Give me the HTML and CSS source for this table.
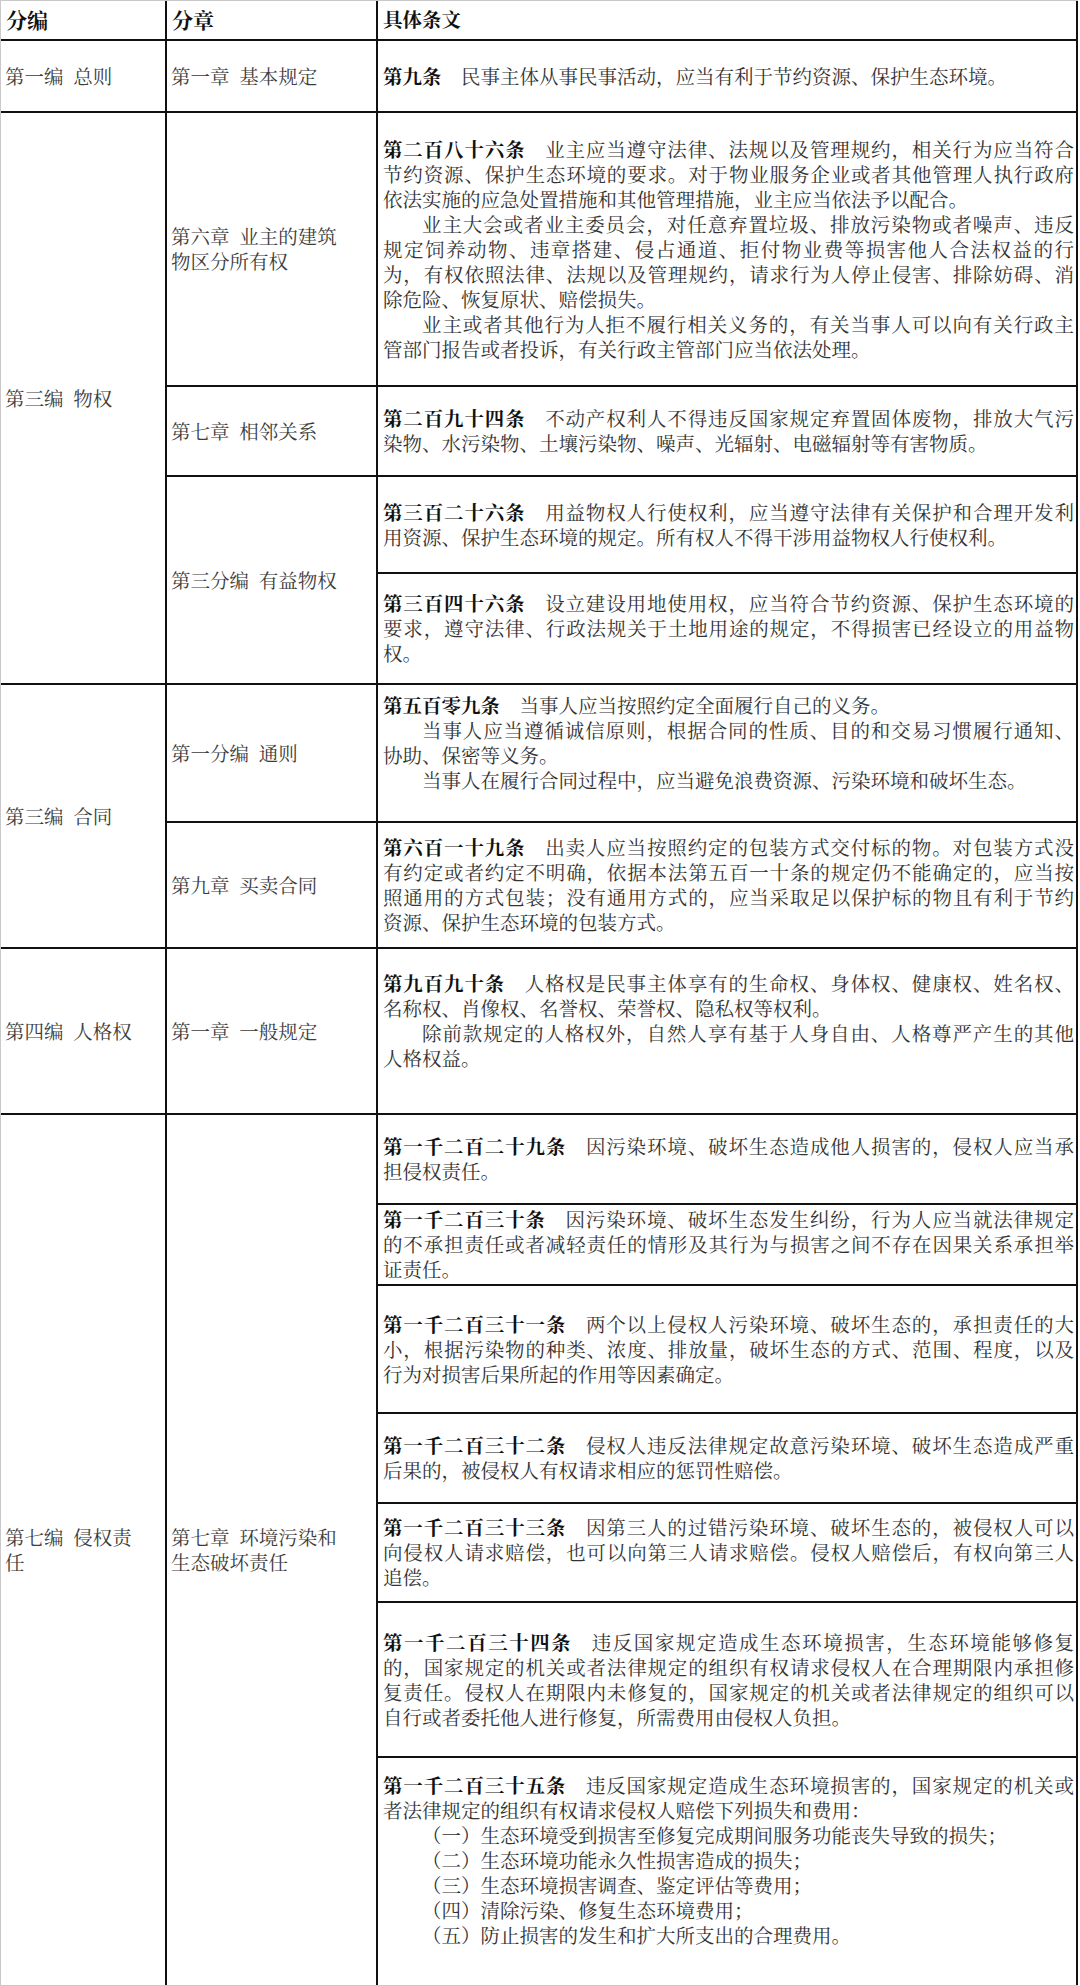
FILE: index.html
```html
<!DOCTYPE html>
<html lang="zh-CN">
<head>
<meta charset="utf-8">
<title>民法典 生态环境条文</title>
<link rel="stylesheet" href="styles.css">
</head>
<body>
<div class="sheet">
  <div class="cell head">分编</div>
  <div class="cell head">分章</div>
  <div class="cell head txt">具体条文</div>

  <div class="cell label">第一编&ensp;总则</div>
  <div class="cell label">第一章&ensp;基本规定</div>
  <div class="cell txt">
    <span class="ln end"><b>第九条</b>民事主体从事民事活动，应当有利于节约资源、保护生态环境。</span>
  </div>

  <div class="cell label span4">第三编&ensp;物权</div>
  <div class="cell label">
    <span class="lb">第六章&ensp;业主的建筑</span>
    <span class="lb">物区分所有权</span>
  </div>
  <div class="cell txt">
    <span class="ln"><b>第二百八十六条</b>业主应当遵守法律、法规以及管理规约，相关行为应当符合</span>
    <span class="ln">节约资源、保护生态环境的要求。对于物业服务企业或者其他管理人执行政府</span>
    <span class="ln end">依法实施的应急处置措施和其他管理措施，业主应当依法予以配合。</span>
    <span class="ln ind">业主大会或者业主委员会，对任意弃置垃圾、排放污染物或者噪声、违反</span>
    <span class="ln">规定饲养动物、违章搭建、侵占通道、拒付物业费等损害他人合法权益的行</span>
    <span class="ln">为，有权依照法律、法规以及管理规约，请求行为人停止侵害、排除妨碍、消</span>
    <span class="ln end">除危险、恢复原状、赔偿损失。</span>
    <span class="ln ind">业主或者其他行为人拒不履行相关义务的，有关当事人可以向有关行政主</span>
    <span class="ln end">管部门报告或者投诉，有关行政主管部门应当依法处理。</span>
  </div>

  <div class="cell label">第七章&ensp;相邻关系</div>
  <div class="cell txt">
    <span class="ln"><b>第二百九十四条</b>不动产权利人不得违反国家规定弃置固体废物，排放大气污</span>
    <span class="ln end">染物、水污染物、土壤污染物、噪声、光辐射、电磁辐射等有害物质。</span>
  </div>

  <div class="cell label span2">第三分编&ensp;有益物权</div>
  <div class="cell txt">
    <span class="ln"><b>第三百二十六条</b>用益物权人行使权利，应当遵守法律有关保护和合理开发利</span>
    <span class="ln end">用资源、保护生态环境的规定。所有权人不得干涉用益物权人行使权利。</span>
  </div>
  <div class="cell txt">
    <span class="ln"><b>第三百四十六条</b>设立建设用地使用权，应当符合节约资源、保护生态环境的</span>
    <span class="ln">要求，遵守法律、行政法规关于土地用途的规定，不得损害已经设立的用益物</span>
    <span class="ln end">权。</span>
  </div>

  <div class="cell label span2">第三编&ensp;合同</div>
  <div class="cell label">第一分编&ensp;通则</div>
  <div class="cell txt lift">
    <span class="ln end"><b>第五百零九条</b>当事人应当按照约定全面履行自己的义务。</span>
    <span class="ln ind">当事人应当遵循诚信原则，根据合同的性质、目的和交易习惯履行通知、</span>
    <span class="ln end">协助、保密等义务。</span>
    <span class="ln ind end">当事人在履行合同过程中，应当避免浪费资源、污染环境和破坏生态。</span>
  </div>

  <div class="cell label">第九章&ensp;买卖合同</div>
  <div class="cell txt">
    <span class="ln"><b>第六百一十九条</b>出卖人应当按照约定的包装方式交付标的物。对包装方式没</span>
    <span class="ln">有约定或者约定不明确，依据本法第五百一十条的规定仍不能确定的，应当按</span>
    <span class="ln">照通用的方式包装；没有通用方式的，应当采取足以保护标的物且有利于节约</span>
    <span class="ln end">资源、保护生态环境的包装方式。</span>
  </div>

  <div class="cell label">第四编&ensp;人格权</div>
  <div class="cell label">第一章&ensp;一般规定</div>
  <div class="cell txt lift">
    <span class="ln"><b>第九百九十条</b>人格权是民事主体享有的生命权、身体权、健康权、姓名权、</span>
    <span class="ln end">名称权、肖像权、名誉权、荣誉权、隐私权等权利。</span>
    <span class="ln ind">除前款规定的人格权外，自然人享有基于人身自由、人格尊严产生的其他</span>
    <span class="ln end">人格权益。</span>
  </div>

  <div class="cell label span7 last">
    <span class="lb">第七编&ensp;侵权责</span>
    <span class="lb">任</span>
  </div>
  <div class="cell label span7 last">
    <span class="lb">第七章&ensp;环境污染和</span>
    <span class="lb">生态破坏责任</span>
  </div>
  <div class="cell txt">
    <span class="ln"><b>第一千二百二十九条</b>因污染环境、破坏生态造成他人损害的，侵权人应当承</span>
    <span class="ln end">担侵权责任。</span>
  </div>
  <div class="cell txt">
    <span class="ln"><b>第一千二百三十条</b>因污染环境、破坏生态发生纠纷，行为人应当就法律规定</span>
    <span class="ln">的不承担责任或者减轻责任的情形及其行为与损害之间不存在因果关系承担举</span>
    <span class="ln end">证责任。</span>
  </div>
  <div class="cell txt">
    <span class="ln"><b>第一千二百三十一条</b>两个以上侵权人污染环境、破坏生态的，承担责任的大</span>
    <span class="ln">小，根据污染物的种类、浓度、排放量，破坏生态的方式、范围、程度，以及</span>
    <span class="ln end">行为对损害后果所起的作用等因素确定。</span>
  </div>
  <div class="cell txt">
    <span class="ln"><b>第一千二百三十二条</b>侵权人违反法律规定故意污染环境、破坏生态造成严重</span>
    <span class="ln end">后果的，被侵权人有权请求相应的惩罚性赔偿。</span>
  </div>
  <div class="cell txt">
    <span class="ln"><b>第一千二百三十三条</b>因第三人的过错污染环境、破坏生态的，被侵权人可以</span>
    <span class="ln">向侵权人请求赔偿，也可以向第三人请求赔偿。侵权人赔偿后，有权向第三人</span>
    <span class="ln end">追偿。</span>
  </div>
  <div class="cell txt">
    <span class="ln"><b>第一千二百三十四条</b>违反国家规定造成生态环境损害，生态环境能够修复</span>
    <span class="ln">的，国家规定的机关或者法律规定的组织有权请求侵权人在合理期限内承担修</span>
    <span class="ln">复责任。侵权人在期限内未修复的，国家规定的机关或者法律规定的组织可以</span>
    <span class="ln end">自行或者委托他人进行修复，所需费用由侵权人负担。</span>
  </div>
  <div class="cell txt last lift2">
    <span class="ln"><b>第一千二百三十五条</b>违反国家规定造成生态环境损害的，国家规定的机关或</span>
    <span class="ln end">者法律规定的组织有权请求侵权人赔偿下列损失和费用：</span>
    <span class="ln ind end">（一）生态环境受到损害至修复完成期间服务功能丧失导致的损失；</span>
    <span class="ln ind end">（二）生态环境功能永久性损害造成的损失；</span>
    <span class="ln ind end">（三）生态环境损害调查、鉴定评估等费用；</span>
    <span class="ln ind end">（四）清除污染、修复生态环境费用；</span>
    <span class="ln ind end">（五）防止损害的发生和扩大所支出的合理费用。</span>
  </div>
</div>
</body>
</html>
```

FILE: styles.css
```css
html, body {
  margin: 0;
  padding: 0;
  background: #ffffff;
}

body {
  width: 1080px;
  font-family: "Noto Serif CJK SC", "Noto Sans CJK SC", serif;
  color: #333333;
}

.sheet {
  display: grid;
  grid-template-columns: 166px 211px 700px;
  grid-template-rows: 40px 72px 274px 90px 97px 111px 138px 126px 166px 90px 81px 128px 90px 99px 155px 227px;
  border-top: 1px solid #c9c9c9;
  border-left: 1px solid #c9c9c9;
  border-bottom: 1px solid #c9c9c9;
  width: 1077px;
}

.cell {
  box-sizing: border-box;
  border-right: 2px solid #111111;
  border-bottom: 2px solid #111111;
  display: flex;
  flex-direction: column;
  justify-content: center;
  padding: 0 2px 0 4px;
  min-width: 0;
}

.cell.last {
  border-bottom: none;
}

.head {
  font-size: 21px;
  font-weight: 700;
  color: #111111;
  line-height: 25px;
  padding-left: 5px;
  padding-bottom: 2px;
}

.label {
  font-size: 19.5px;
  line-height: 25px;
  color: #3c3c3c;
}

.lb {
  display: block;
}

.span2 { grid-row: span 2; }
.span4 { grid-row: span 4; }
.span7 { grid-row: span 7; }

.txt {
  font-size: 19.5px;
  line-height: 25px;
  padding-left: 5px;
  padding-right: 2px;
}

.txt.lift {
  padding-bottom: 20px;
}

.txt.lift2 {
  padding-bottom: 22px;
}

.ln {
  display: block;
  text-align: justify;
  text-align-last: justify;
}

.ln.end {
  text-align-last: left;
}

.ln.ind {
  padding-left: 2em;
}

.ln b {
  font-weight: 700;
  color: #111111;
  margin-right: 1em;
}
```
